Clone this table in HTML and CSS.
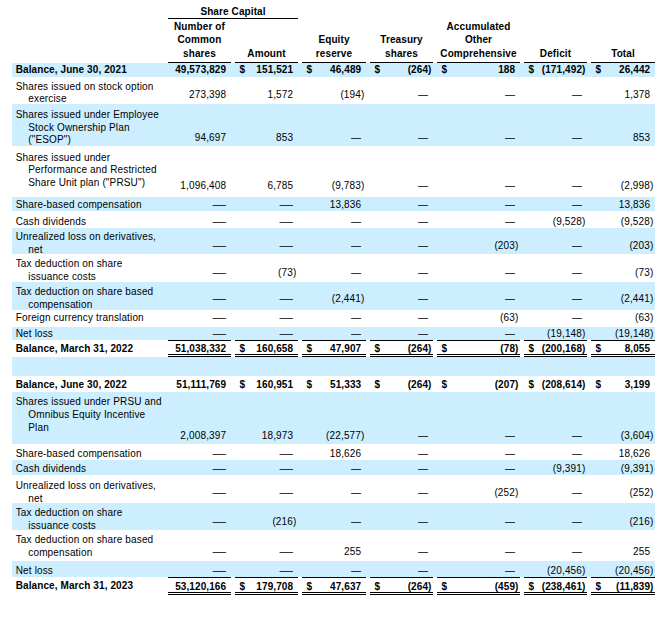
FILE: index.html
```html
<!DOCTYPE html>
<html>
<head>
<meta charset="utf-8">
<link rel="stylesheet" href="styles.css">
</head>
<body>
<div class="wrap">
<table class="eq">
<colgroup>
<col class="cl"><col class="c67"><col class="c67"><col class="c68"><col class="c67"><col class="c87"><col class="c67"><col class="c68">
</colgroup>
<thead>
<tr class="hr1">
<td></td>
<td class="h" colspan="2"><div class="hc1">Share Capital</div></td>
<td></td><td></td><td></td><td></td><td></td>
</tr>
<tr class="hr2">
<td></td>
<td class="h"><div class="hc">Number of<br>Common<br>shares</div></td>
<td class="h"><div class="hc">Amount</div></td>
<td class="h"><div class="hc">Equity<br>reserve</div></td>
<td class="h"><div class="hc">Treasury<br>shares</div></td>
<td class="h"><div class="hc">Accumulated<br>Other<br>Comprehensive</div></td>
<td class="h"><div class="hc">Deficit</div></td>
<td class="h"><div class="hc">Total</div></td>
</tr>
</thead>
<tbody>
<tr class="r1 blue bold">
<td class="l">Balance, June 30, 2021</td>
<td class="v"><div class="c"><span class="n p">49,573,829</span></div></td>
<td class="v"><div class="c"><span>$</span><span class="n p">151,521</span></div></td>
<td class="v"><div class="c"><span>$</span><span class="n p">46,489</span></div></td>
<td class="v"><div class="c"><span>$</span><span class="n">(264)</span></div></td>
<td class="v"><div class="c"><span>$</span><span class="n p">188</span></div></td>
<td class="v"><div class="c"><span>$</span><span class="n">(171,492)</span></div></td>
<td class="v"><div class="c"><span>$</span><span class="n p">26,442</span></div></td>
</tr>
<tr class="r2 ml">
<td class="l"><div class="lt">Shares issued on stock option<br>exercise</div></td>
<td class="v"><div class="c"><span class="n p">273,398</span></div></td>
<td class="v"><div class="c"><span class="n p">1,572</span></div></td>
<td class="v"><div class="c"><span class="n">(194)</span></div></td>
<td class="v"><div class="c"><span class="n p">—</span></div></td>
<td class="v"><div class="c"><span class="n p">—</span></div></td>
<td class="v"><div class="c"><span class="n p">—</span></div></td>
<td class="v"><div class="c"><span class="n p">1,378</span></div></td>
</tr>
<tr class="r3 ml blue">
<td class="l"><div class="lt">Shares issued under Employee<br>Stock Ownership Plan<br>("ESOP")</div></td>
<td class="v"><div class="c"><span class="n p">94,697</span></div></td>
<td class="v"><div class="c"><span class="n p">853</span></div></td>
<td class="v"><div class="c"><span class="n p">—</span></div></td>
<td class="v"><div class="c"><span class="n p">—</span></div></td>
<td class="v"><div class="c"><span class="n p">—</span></div></td>
<td class="v"><div class="c"><span class="n p">—</span></div></td>
<td class="v"><div class="c"><span class="n p">853</span></div></td>
</tr>
<tr class="r4 ml">
<td class="l"><div class="lt">Shares issued under<br>Performance and Restricted<br>Share Unit plan ("PRSU")</div></td>
<td class="v"><div class="c"><span class="n p">1,096,408</span></div></td>
<td class="v"><div class="c"><span class="n p">6,785</span></div></td>
<td class="v"><div class="c"><span class="n">(9,783)</span></div></td>
<td class="v"><div class="c"><span class="n p">—</span></div></td>
<td class="v"><div class="c"><span class="n p">—</span></div></td>
<td class="v"><div class="c"><span class="n p">—</span></div></td>
<td class="v"><div class="c"><span class="n">(2,998)</span></div></td>
</tr>
<tr class="r5 blue">
<td class="l">Share-based compensation</td>
<td class="v"><div class="c"><span class="n p"><i class="dw">—</i></span></div></td>
<td class="v"><div class="c"><span class="n p"><i class="dw">—</i></span></div></td>
<td class="v"><div class="c"><span class="n p">13,836</span></div></td>
<td class="v"><div class="c"><span class="n p">—</span></div></td>
<td class="v"><div class="c"><span class="n p">—</span></div></td>
<td class="v"><div class="c"><span class="n p">—</span></div></td>
<td class="v"><div class="c"><span class="n p">13,836</span></div></td>
</tr>
<tr class="r6">
<td class="l">Cash dividends</td>
<td class="v"><div class="c"><span class="n p"><i class="dw">—</i></span></div></td>
<td class="v"><div class="c"><span class="n p"><i class="dw">—</i></span></div></td>
<td class="v"><div class="c"><span class="n p">—</span></div></td>
<td class="v"><div class="c"><span class="n p">—</span></div></td>
<td class="v"><div class="c"><span class="n p">—</span></div></td>
<td class="v"><div class="c"><span class="n">(9,528)</span></div></td>
<td class="v"><div class="c"><span class="n">(9,528)</span></div></td>
</tr>
<tr class="r7 ml blue">
<td class="l"><div class="lt">Unrealized loss on derivatives,<br>net</div></td>
<td class="v"><div class="c"><span class="n p"><i class="dw">—</i></span></div></td>
<td class="v"><div class="c"><span class="n p"><i class="dw">—</i></span></div></td>
<td class="v"><div class="c"><span class="n p">—</span></div></td>
<td class="v"><div class="c"><span class="n p">—</span></div></td>
<td class="v"><div class="c"><span class="n">(203)</span></div></td>
<td class="v"><div class="c"><span class="n p">—</span></div></td>
<td class="v"><div class="c"><span class="n">(203)</span></div></td>
</tr>
<tr class="r8 ml">
<td class="l"><div class="lt">Tax deduction on share<br>issuance costs</div></td>
<td class="v"><div class="c"><span class="n p"><i class="dw">—</i></span></div></td>
<td class="v"><div class="c"><span class="n">(73)</span></div></td>
<td class="v"><div class="c"><span class="n p">—</span></div></td>
<td class="v"><div class="c"><span class="n p">—</span></div></td>
<td class="v"><div class="c"><span class="n p">—</span></div></td>
<td class="v"><div class="c"><span class="n p">—</span></div></td>
<td class="v"><div class="c"><span class="n">(73)</span></div></td>
</tr>
<tr class="r9 ml blue">
<td class="l"><div class="lt">Tax deduction on share based<br>compensation</div></td>
<td class="v"><div class="c"><span class="n p"><i class="dw">—</i></span></div></td>
<td class="v"><div class="c"><span class="n p"><i class="dw">—</i></span></div></td>
<td class="v"><div class="c"><span class="n">(2,441)</span></div></td>
<td class="v"><div class="c"><span class="n p">—</span></div></td>
<td class="v"><div class="c"><span class="n p">—</span></div></td>
<td class="v"><div class="c"><span class="n p">—</span></div></td>
<td class="v"><div class="c"><span class="n">(2,441)</span></div></td>
</tr>
<tr class="r10">
<td class="l">Foreign currency translation</td>
<td class="v"><div class="c"><span class="n p"><i class="dw">—</i></span></div></td>
<td class="v"><div class="c"><span class="n p"><i class="dw">—</i></span></div></td>
<td class="v"><div class="c"><span class="n p">—</span></div></td>
<td class="v"><div class="c"><span class="n p">—</span></div></td>
<td class="v"><div class="c"><span class="n">(63)</span></div></td>
<td class="v"><div class="c"><span class="n p">—</span></div></td>
<td class="v"><div class="c"><span class="n">(63)</span></div></td>
</tr>
<tr class="r11 blue">
<td class="l">Net loss</td>
<td class="v"><div class="c"><span class="n p"><i class="dw">—</i></span></div></td>
<td class="v"><div class="c"><span class="n p"><i class="dw">—</i></span></div></td>
<td class="v"><div class="c"><span class="n p">—</span></div></td>
<td class="v"><div class="c"><span class="n p">—</span></div></td>
<td class="v"><div class="c"><span class="n p">—</span></div></td>
<td class="v"><div class="c"><span class="n">(19,148)</span></div></td>
<td class="v"><div class="c"><span class="n">(19,148)</span></div></td>
</tr>
<tr class="r12 tot bold">
<td class="l">Balance, March 31, 2022</td>
<td class="v"><div class="c"><span class="n p">51,038,332</span></div></td>
<td class="v"><div class="c"><span>$</span><span class="n p">160,658</span></div></td>
<td class="v"><div class="c"><span>$</span><span class="n p">47,907</span></div></td>
<td class="v"><div class="c"><span>$</span><span class="n">(264)</span></div></td>
<td class="v"><div class="c"><span>$</span><span class="n">(78)</span></div></td>
<td class="v"><div class="c"><span>$</span><span class="n">(200,168)</span></div></td>
<td class="v"><div class="c"><span>$</span><span class="n p">8,055</span></div></td>
</tr>
<tr class="r13 blue">
<td></td><td></td><td></td><td></td><td></td><td></td><td></td><td></td>
</tr>
<tr class="r14 bold">
<td class="l">Balance, June 30, 2022</td>
<td class="v"><div class="c"><span class="n p">51,111,769</span></div></td>
<td class="v"><div class="c"><span>$</span><span class="n p">160,951</span></div></td>
<td class="v"><div class="c"><span>$</span><span class="n p">51,333</span></div></td>
<td class="v"><div class="c"><span>$</span><span class="n">(264)</span></div></td>
<td class="v"><div class="c"><span>$</span><span class="n">(207)</span></div></td>
<td class="v"><div class="c"><span>$</span><span class="n">(208,614)</span></div></td>
<td class="v"><div class="c"><span>$</span><span class="n p">3,199</span></div></td>
</tr>
<tr class="r15 ml blue">
<td class="l"><div class="lt">Shares issued under PRSU and<br>Omnibus Equity Incentive<br>Plan</div></td>
<td class="v"><div class="c"><span class="n p">2,008,397</span></div></td>
<td class="v"><div class="c"><span class="n p">18,973</span></div></td>
<td class="v"><div class="c"><span class="n">(22,577)</span></div></td>
<td class="v"><div class="c"><span class="n p">—</span></div></td>
<td class="v"><div class="c"><span class="n p">—</span></div></td>
<td class="v"><div class="c"><span class="n p">—</span></div></td>
<td class="v"><div class="c"><span class="n">(3,604)</span></div></td>
</tr>
<tr class="r16">
<td class="l">Share-based compensation</td>
<td class="v"><div class="c"><span class="n p"><i class="dw">—</i></span></div></td>
<td class="v"><div class="c"><span class="n p"><i class="dw">—</i></span></div></td>
<td class="v"><div class="c"><span class="n p">18,626</span></div></td>
<td class="v"><div class="c"><span class="n p">—</span></div></td>
<td class="v"><div class="c"><span class="n p">—</span></div></td>
<td class="v"><div class="c"><span class="n p">—</span></div></td>
<td class="v"><div class="c"><span class="n p">18,626</span></div></td>
</tr>
<tr class="r17 blue">
<td class="l">Cash dividends</td>
<td class="v"><div class="c"><span class="n p"><i class="dw">—</i></span></div></td>
<td class="v"><div class="c"><span class="n p"><i class="dw">—</i></span></div></td>
<td class="v"><div class="c"><span class="n p">—</span></div></td>
<td class="v"><div class="c"><span class="n p">—</span></div></td>
<td class="v"><div class="c"><span class="n p">—</span></div></td>
<td class="v"><div class="c"><span class="n">(9,391)</span></div></td>
<td class="v"><div class="c"><span class="n">(9,391)</span></div></td>
</tr>
<tr class="r18 ml">
<td class="l"><div class="lt">Unrealized loss on derivatives,<br>net</div></td>
<td class="v"><div class="c"><span class="n p"><i class="dw">—</i></span></div></td>
<td class="v"><div class="c"><span class="n p"><i class="dw">—</i></span></div></td>
<td class="v"><div class="c"><span class="n p">—</span></div></td>
<td class="v"><div class="c"><span class="n p">—</span></div></td>
<td class="v"><div class="c"><span class="n">(252)</span></div></td>
<td class="v"><div class="c"><span class="n p">—</span></div></td>
<td class="v"><div class="c"><span class="n">(252)</span></div></td>
</tr>
<tr class="r19 ml blue">
<td class="l"><div class="lt">Tax deduction on share<br>issuance costs</div></td>
<td class="v"><div class="c"><span class="n p"><i class="dw">—</i></span></div></td>
<td class="v"><div class="c"><span class="n">(216)</span></div></td>
<td class="v"><div class="c"><span class="n p">—</span></div></td>
<td class="v"><div class="c"><span class="n p">—</span></div></td>
<td class="v"><div class="c"><span class="n p">—</span></div></td>
<td class="v"><div class="c"><span class="n p">—</span></div></td>
<td class="v"><div class="c"><span class="n">(216)</span></div></td>
</tr>
<tr class="r20 ml">
<td class="l"><div class="lt">Tax deduction on share based<br>compensation</div></td>
<td class="v"><div class="c"><span class="n p"><i class="dw">—</i></span></div></td>
<td class="v"><div class="c"><span class="n p"><i class="dw">—</i></span></div></td>
<td class="v"><div class="c"><span class="n p">255</span></div></td>
<td class="v"><div class="c"><span class="n p">—</span></div></td>
<td class="v"><div class="c"><span class="n p">—</span></div></td>
<td class="v"><div class="c"><span class="n p">—</span></div></td>
<td class="v"><div class="c"><span class="n p">255</span></div></td>
</tr>
<tr class="r21 blue">
<td class="l">Net loss</td>
<td class="v"><div class="c"><span class="n p"><i class="dw">—</i></span></div></td>
<td class="v"><div class="c"><span class="n p"><i class="dw">—</i></span></div></td>
<td class="v"><div class="c"><span class="n p">—</span></div></td>
<td class="v"><div class="c"><span class="n p">—</span></div></td>
<td class="v"><div class="c"><span class="n p">—</span></div></td>
<td class="v"><div class="c"><span class="n">(20,456)</span></div></td>
<td class="v"><div class="c"><span class="n">(20,456)</span></div></td>
</tr>
<tr class="r22 tot bold">
<td class="l">Balance, March 31, 2023</td>
<td class="v"><div class="c"><span class="n p">53,120,166</span></div></td>
<td class="v"><div class="c"><span>$</span><span class="n p">179,708</span></div></td>
<td class="v"><div class="c"><span>$</span><span class="n p">47,637</span></div></td>
<td class="v"><div class="c"><span>$</span><span class="n">(264)</span></div></td>
<td class="v"><div class="c"><span>$</span><span class="n">(459)</span></div></td>
<td class="v"><div class="c"><span>$</span><span class="n">(238,461)</span></div></td>
<td class="v"><div class="c"><span>$</span><span class="n">(11,839)</span></div></td>
</tr>
</tbody>
</table>
</div>
</body>
</html>
```
FILE: styles.css
```css
html, body {
  margin: 0;
  padding: 0;
  background: #ffffff;
}
body {
  font-family: "Liberation Sans", Arial, sans-serif;
  font-size: 10px;
  color: #000000;
  letter-spacing: 0.15px;
}
.wrap {
  padding: 6px 0 0 12px;
}
.eq {
  border-collapse: collapse;
  table-layout: fixed;
  width: 643px;
}
.cl { width: 152px; }
.c67 { width: 67px; }
.c68 { width: 68px; }
.c87 { width: 87px; }

.eq td {
  padding: 0;
  line-height: 12.5px;
  white-space: nowrap;
}

/* headers */
.hr1 { height: 13px; }
.hr2 { height: 44px; }
.eq td.h {
  padding-left: 4px;
  vertical-align: bottom;
  text-align: center;
  font-weight: bold;
  letter-spacing: 0.1px;
}
.hc1 {
  line-height: 12px;
  border-bottom: 1px solid #000;
}
.hc {
  line-height: 13.3px;
  padding-bottom: 2px;
  border-bottom: 1px solid #000;
}

/* body rows */
.eq tbody tr {
  height: var(--h);
}
.eq tbody td {
  vertical-align: bottom;
  padding-bottom: var(--pb, 0px);
}
.eq td.l {
  padding-left: 3.7px;
}
.blue td {
  background: #cceeff;
}
.bold td {
  font-weight: bold;
  letter-spacing: 0.1px;
}
.ml td.l {
  vertical-align: top;
  padding-top: var(--pt);
  line-height: var(--lh, 13px);
}
.lt {
  padding-left: 12.6px;
  text-indent: -12.6px;
  margin-bottom: -8px;
}

.eq td.v {
  padding-left: 4px;
}
.c {
  display: flex;
  padding: 0 1.5px 0 4.5px;
}
.c .n {
  margin-left: auto;
}
.c .n.p {
  padding-right: 3.3px;
}
.dw {
  font-style: normal;
  display: inline-block;
  transform: scaleX(1.35);
  transform-origin: right center;
}

/* totals */
.tot td.v {
  padding-bottom: 0;
}
.tot .c {
  border-top: 1px solid #000;
  border-bottom: 3px double #000;
  padding-top: var(--ct, 2px);
  line-height: 11px;
}

/* per-row geometry */
.r1  { --h: 14px; --pb: 0.5px; }
.r2  { --h: 27px; --pt: 3.7px; --pb: 2.2px; --lh: 12.5px; }
.r3  { --h: 42px; --pt: 5.3px; --pb: 1.2px; --lh: 12.5px; }
.r4  { --h: 51px; --pt: 5.6px; --pb: 4.2px; --lh: 12.5px; }
.r5  { --h: 14px; --pb: 0px; }
.r6  { --h: 17px; --pb: 0px; }
.r7  { --h: 26px; --pt: 2.3px; --pb: 1.5px; }
.r8  { --h: 28px; --pt: 3.4px; --pb: 2.9px; }
.r9  { --h: 28px; --pt: 3.3px; --pb: 4.7px; }
.r10 { --h: 17px; --pb: 2.2px; }
.r11 { --h: 13px; --pb: 0px; }
.r12 { --h: 17px; --pb: 1.5px; --ct: 2px; }
.r13 { --h: 19px; }
.r14 { --h: 16px; --pb: 0.6px; }
.r15 { --h: 52px; --pt: 3.3px; --pb: 1.9px; }
.r16 { --h: 16px; --pb: 0px; }
.r17 { --h: 15px; --pb: 0px; }
.r18 { --h: 28px; --pt: 4.3px; --pb: 3.4px; }
.r19 { --h: 27px; --pt: 3.3px; --pb: 1.7px; }
.r20 { --h: 31px; --pt: 4.3px; --pb: 2.9px; --lh: 12.5px; }
.r21 { --h: 16px; --pb: 0px; }
.r22 { --h: 18px; --pb: 2.9px; --ct: 3px; }
```
